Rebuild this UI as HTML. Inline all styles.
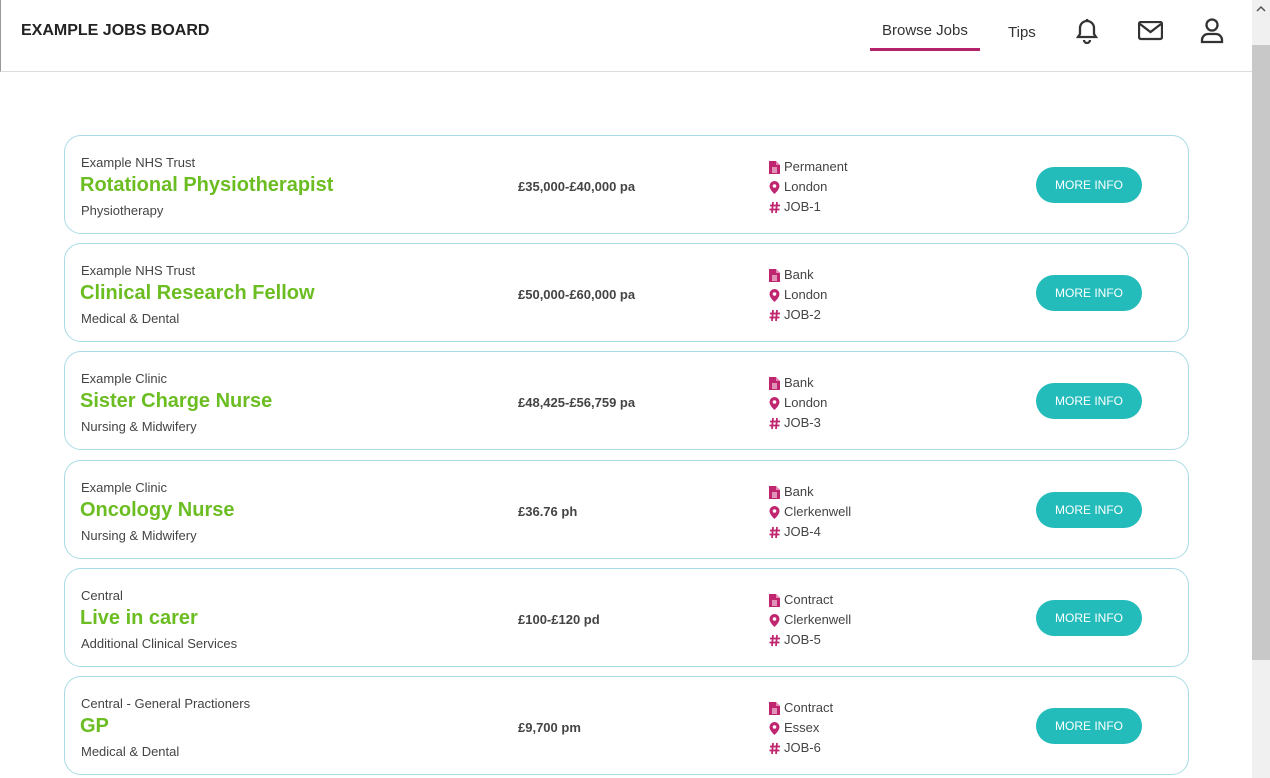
<!DOCTYPE html>
<html><head><style>
*{box-sizing:border-box;margin:0;padding:0}
body{width:1270px;height:778px;overflow:hidden;background:#fff;font-family:"Liberation Sans",sans-serif;color:#333;position:relative}
.hdr{position:absolute;left:0;top:0;width:1252px;height:72px;border-bottom:1px solid #ddd;border-left:1px solid #999}
.logo{position:absolute;left:20px;top:22px;font-weight:bold;font-size:16px;color:#222}
.nav{position:absolute;top:22px;font-size:15px;color:#333}
.ul{position:absolute;left:869px;top:48px;width:110px;height:3px;background:#b5246b}
.sb{position:absolute;left:1252px;top:0;width:18px;height:778px;background:#f0f0f0}
.th{position:absolute;left:1252px;top:45px;width:18px;height:615px;background:#c8c8c8}
.card{position:absolute;left:64px;width:1125px;height:99px;border:1px solid #a9dbe5;border-radius:17px}
.org{position:absolute;left:16px;top:19px;font-size:13px;color:#444}
.t{position:absolute;left:15px;top:38px;font-size:20px;font-weight:bold;color:#6bbd22}
.cat{position:absolute;left:16px;top:67px;font-size:13px;color:#444}
.pay{position:absolute;left:453px;top:43px;font-size:13px;font-weight:bold;color:#444}
.meta{position:absolute;left:704px;top:21px;font-size:13px;color:#444;line-height:20px}
.meta div{display:flex;align-items:center}
.meta svg{width:11px;height:13px;margin-right:4px}
.btn{position:absolute;left:971px;top:31px;width:106px;height:36px;border-radius:18px;background:#23bcbb;color:#fff;font-size:12px;text-align:center;line-height:36px}
</style></head><body>
<div class="hdr">
<div class="logo">EXAMPLE JOBS BOARD</div>
<div class="nav" style="left:881px">Browse Jobs</div>
<div class="nav" style="left:1007px;top:24px">Tips</div>
<div class="ul"></div>
<svg style="position:absolute;left:1074px;top:18px" width="24" height="26" viewBox="0 0 24 26" fill="none" stroke="#333" stroke-width="2.3"><path d="M12 3a7 7 0 0 0-7 7v6l-2 3h18l-2-3v-6a7 7 0 0 0-7-7z"/><path d="M12 1v2M9 22a3 3 0 0 0 6 0" /></svg>
<svg style="position:absolute;left:1137px;top:21px" width="25" height="20" viewBox="0 0 25 20" fill="none" stroke="#333" stroke-width="2.3"><rect x="1" y="1" width="23" height="17" rx="2"/><path d="M2 3l10.5 8L23 3"/></svg>
<svg style="position:absolute;left:1199px;top:18px" width="24" height="26" viewBox="0 0 24 26" fill="none" stroke="#333" stroke-width="2.3"><circle cx="12" cy="7" r="5.5"/><path d="M2 24v-2a6 6 0 0 1 6-6h8a6 6 0 0 1 6 6v2z"/></svg>
</div>
<div class="sb"></div><div class="th"></div>
<svg style="position:absolute;left:1256px;top:5px" width="10" height="8"><path d="M1 6l4-4 4 4" fill="none" stroke="#555" stroke-width="1.5"/></svg>

<div id="c"></div>
<script>
var d=[["Example NHS Trust","Rotational Physiotherapist","Physiotherapy","£35,000-£40,000 pa","Permanent","London","JOB-1"],
["Example NHS Trust","Clinical Research Fellow","Medical &amp; Dental","£50,000-£60,000 pa","Bank","London","JOB-2"],
["Example Clinic","Sister Charge Nurse","Nursing &amp; Midwifery","£48,425-£56,759 pa","Bank","London","JOB-3"],
["Example Clinic","Oncology Nurse","Nursing &amp; Midwifery","£36.76 ph","Bank","Clerkenwell","JOB-4"],
["Central","Live in carer","Additional Clinical Services","£100-£120 pd","Contract","Clerkenwell","JOB-5"],
["Central - General Practioners","GP","Medical &amp; Dental","£9,700 pm","Contract","Essex","JOB-6"]];
var tops=[135,243,351,460,568,676],h="";
var doc='<svg viewBox="0 0 11 13"><path d="M0 0h7l4 4v9H0z" fill="#c0266f"/><path d="M7 0v4h4" fill="#e78ab5"/><path d="M3 7h5M3 9h5M3 11h5" stroke="#fff" stroke-width="1"/></svg>';
var pin='<svg viewBox="0 0 11 13"><path d="M5.5 0a5 5 0 0 0-5 5c0 3.5 5 8 5 8s5-4.5 5-8a5 5 0 0 0-5-5z" fill="#c0266f"/><circle cx="5.5" cy="5" r="1.8" fill="#fff"/></svg>';
var hs='<svg viewBox="0 0 11 13"><path d="M4 1L3 12M8 1L7 12M1 4.5h10M0.5 8.5h10" stroke="#c0266f" stroke-width="1.8"/></svg>';
d.forEach(function(r,i){h+='<div class="card" style="top:'+tops[i]+'px"><div class="org">'+r[0]+'</div><div class="t">'+r[1]+'</div><div class="cat">'+r[2]+'</div><div class="pay">'+r[3]+'</div><div class="meta"><div>'+doc+r[4]+'</div><div>'+pin+r[5]+'</div><div>'+hs+r[6]+'</div></div><div class="btn">MORE INFO</div></div>';});
document.getElementById("c").innerHTML=h;
</script>
</body></html>
